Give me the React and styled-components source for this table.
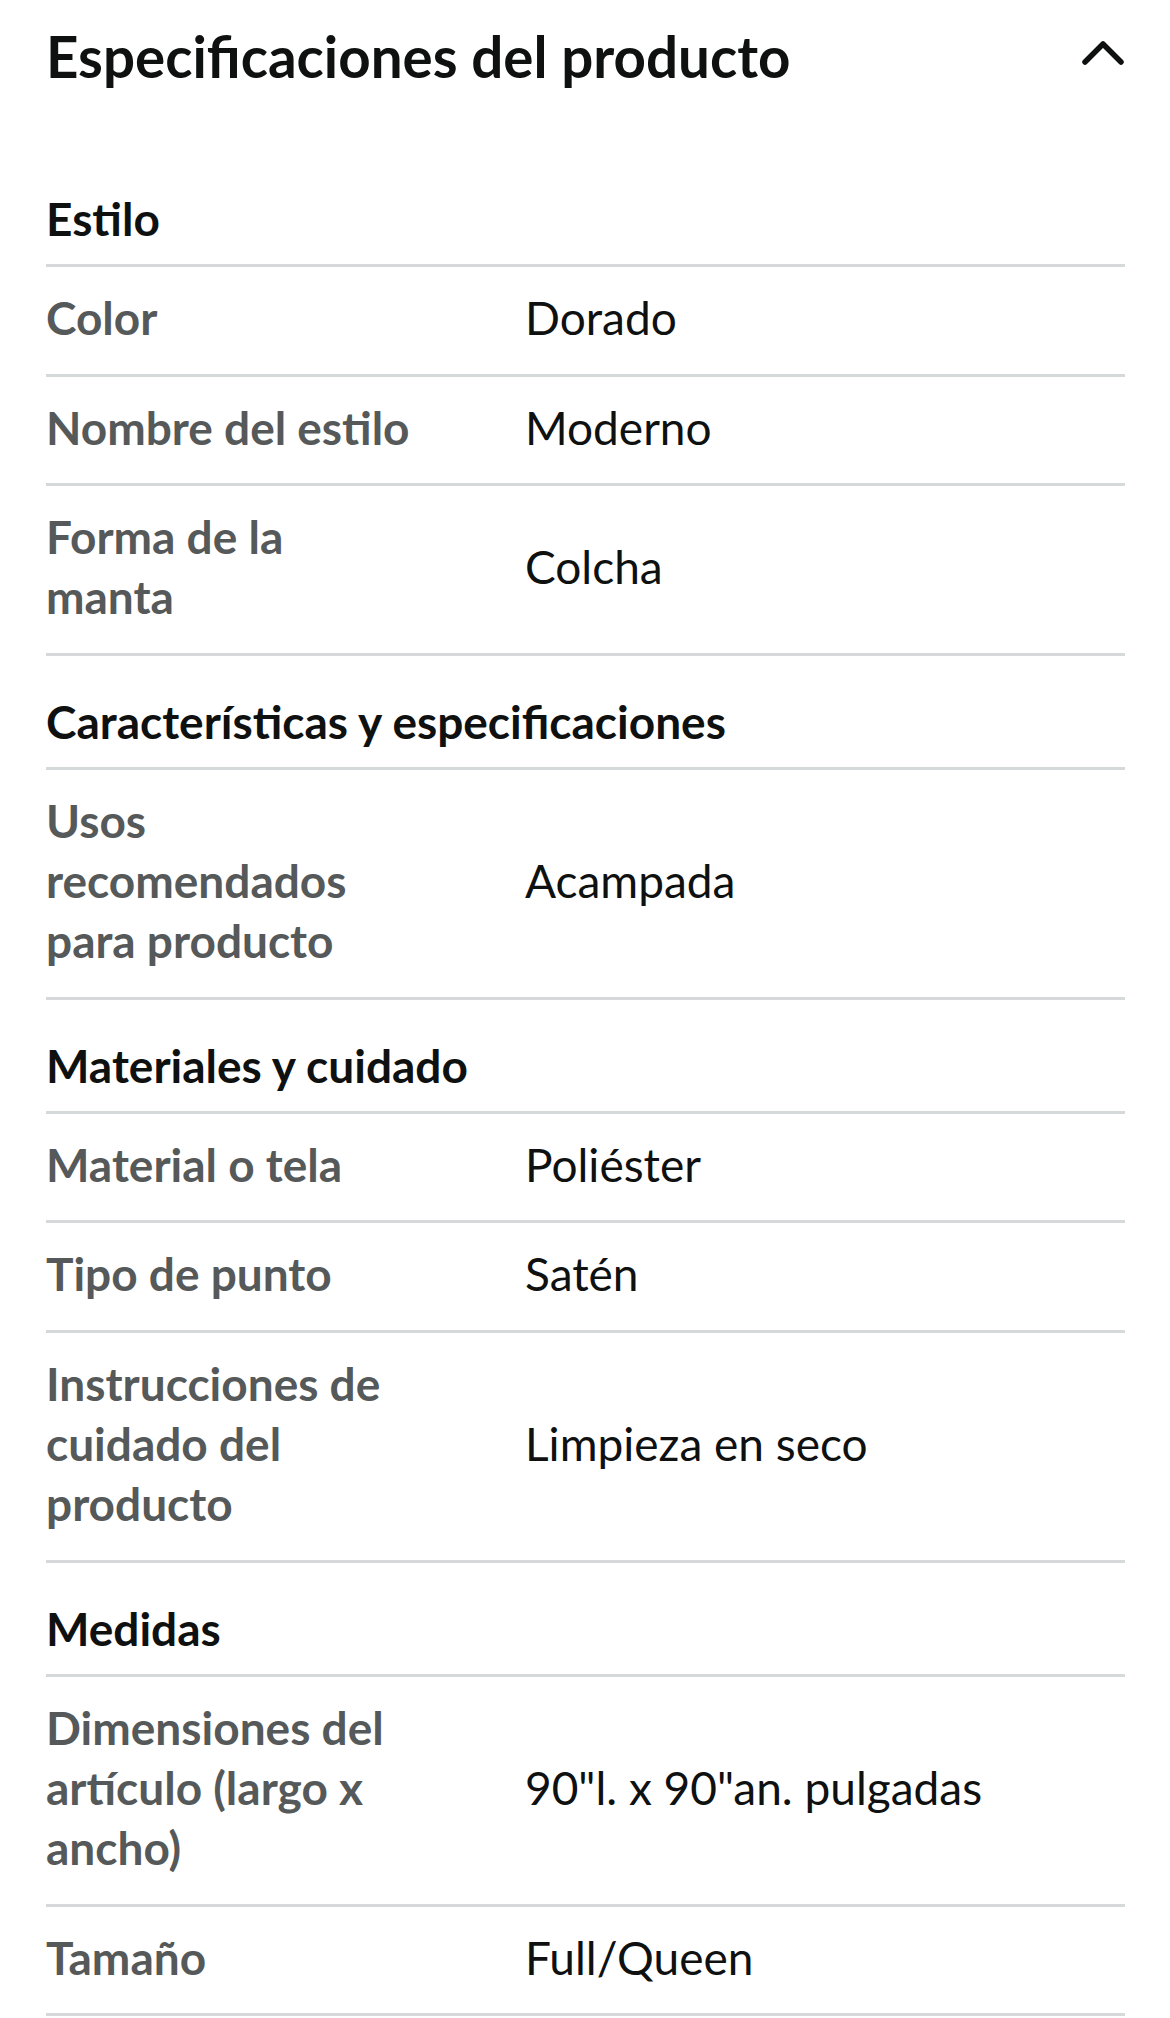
import React from 'react';
import styled, { createGlobalStyle } from 'styled-components';

const sections = [
  {
    title: 'Estilo',
    rows: [
      ['Color', 'Dorado'],
      ['Nombre del estilo', 'Moderno'],
      ['Forma de la manta', 'Colcha'],
    ],
  },
  {
    title: 'Características y especificaciones',
    rows: [['Usos recomendados para producto', 'Acampada']],
  },
  {
    title: 'Materiales y cuidado',
    rows: [
      ['Material o tela', 'Poliéster'],
      ['Tipo de punto', 'Satén'],
      ['Instrucciones de cuidado del producto', 'Limpieza en seco'],
    ],
  },
  {
    title: 'Medidas',
    rows: [
      ['Dimensiones del artículo (largo x ancho)', '90"l. x 90"an. pulgadas'],
      ['Tamaño', 'Full/Queen'],
    ],
  },
];

const GlobalStyle = createGlobalStyle`
  body {
    margin: 0;
    background: #fff;
    font-family: Lato, "Open Sans", sans-serif;
    color: #0f1111;
  }
`;

const Page = styled.div`
  padding: 0 45px 0 46px;
`;

const Header = styled.div`
  display: flex;
  justify-content: space-between;
  align-items: flex-start;
  padding-top: 24px;
  margin-bottom: 65px;
`;

const Title = styled.h1`
  margin: 0;
  font-size: 56.5px;
  line-height: 64px;
  font-weight: 700;
  color: #0f1111;
`;

const Caret = styled.svg`
  width: 42px;
  height: 26px;
  margin-top: 16px;
  margin-right: 1px;
`;

const SectionTitle = styled.h2`
  margin: 0;
  padding: 36px 0 15px;
  font-size: 46px;
  line-height: 60px;
  font-weight: 700;
  color: #0f1111;
  border-bottom: 3px solid #d5d9d9;
`;

const Row = styled.div`
  display: grid;
  grid-template-columns: 479px 1fr;
  align-items: center;
  padding: 21px 0 25.7px;
  border-bottom: 3px solid #d5d9d9;
`;

const Label = styled.div`
  max-width: 368px;
  font-size: 46px;
  line-height: 60px;
  font-weight: 700;
  color: #565959;
`;

const Value = styled.div`
  font-size: 46px;
  line-height: 60px;
  font-weight: 400;
  color: #0f1111;
`;

export default function App() {
  return (
    <Page>
      <GlobalStyle />
      <Header>
        <Title>Especificaciones del producto</Title>
        <Caret viewBox="0 0 42 26" fill="none">
          <path d="M3 22 L21 4 L39 22" stroke="#0f1111" strokeWidth="5.5" strokeLinecap="round" strokeLinejoin="round" />
        </Caret>
      </Header>
      {sections.map(section => (
        <section key={section.title}>
          <SectionTitle>{section.title}</SectionTitle>
          {section.rows.map(([label, value]) => (
            <Row key={label}>
              <Label>{label}</Label>
              <Value>{value}</Value>
            </Row>
          ))}
        </section>
      ))}
    </Page>
  );
}
